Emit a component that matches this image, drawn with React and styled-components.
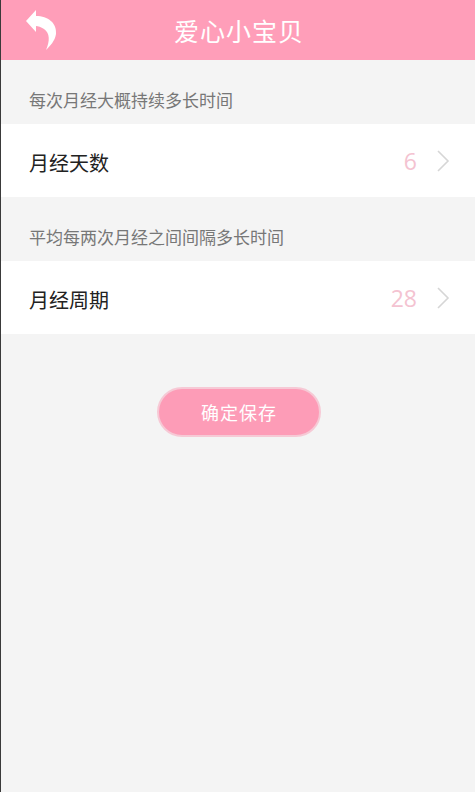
import React from 'react';
import styled, { createGlobalStyle } from 'styled-components';

const GlobalStyle = createGlobalStyle`
  html, body {
    margin: 0;
    padding: 0;
    background: #f4f4f4;
  }
  body {
    font-family: "Noto Sans CJK SC", "Noto Sans", sans-serif;
  }
`;

const Page = styled.div`
  min-height: 792px;
  background: #f4f4f4;
  border-left: 1px solid #3a3a3a;
  box-sizing: border-box;
  display: flex;
  flex-direction: column;
`;

const Header = styled.div`
  height: 60px;
  background: #ff9eb9;
  display: flex;
  align-items: center;
  justify-content: center;
  position: relative;
`;

const BackButton = styled.div`
  position: absolute;
  left: 21px;
  top: 8px;
  width: 40px;
  height: 44px;
`;

const Title = styled.div`
  color: #fff;
  font-size: 25px;
  letter-spacing: 1px;
  margin-left: 2px;
`;

const SectionLabel = styled.div`
  height: 64px;
  box-sizing: border-box;
  padding: 27px 0 0 28px;
  font-size: 17px;
  color: #777;
`;

const Row = styled.div`
  height: 73px;
  background: #fff;
  display: flex;
  align-items: center;
  padding: 0 24px 0 28px;
  box-sizing: border-box;
`;

const RowTitle = styled.div`
  flex: 1;
  font-size: 20px;
  color: #222;
  padding-top: 4px;
`;

const Value = styled.div`
  font-family: "Open Sans", "Noto Sans", sans-serif;
  font-size: 23px;
  color: #f4c3d1;
  margin-right: 18px;
`;

const Actions = styled.div`
  display: flex;
  justify-content: center;
  padding-top: 53px;
`;

const SaveButton = styled.button`
  width: 164px;
  height: 50px;
  border-radius: 25px;
  border: 2px solid #f6c9d5;
  background: #fd9cb7;
  color: #fff;
  font-family: "Noto Sans CJK SC", sans-serif;
  font-size: 18px;
  letter-spacing: 1px;
  margin-left: 2px;
`;

const Chevron = () => (
  <svg width="16" height="24" viewBox="0 0 16 24">
    <path d="M3 2 L13 12 L3 22" fill="none" stroke="#d6d6d6" strokeWidth="1.6" />
  </svg>
);

const BackIcon = () => (
  <svg width="40" height="44" viewBox="0 0 40 44">
    <path
      d="M4 13 L14 2 L14 8 C26 8 35 15 34 26 C33 33 28 38 24 42 C28 33 28 25 22 21 C19 19 16 18 14 18 L14 24 Z"
      fill="#fff"
    />
  </svg>
);

const settings = [
  { label: '每次月经大概持续多长时间', title: '月经天数', value: '6' },
  { label: '平均每两次月经之间间隔多长时间', title: '月经周期', value: '28' },
];

export default function App() {
  return (
    <>
      <GlobalStyle />
      <Page>
        <Header>
          <BackButton>
            <BackIcon />
          </BackButton>
          <Title>爱心小宝贝</Title>
        </Header>
        {settings.map((s) => (
          <React.Fragment key={s.title}>
            <SectionLabel>{s.label}</SectionLabel>
            <Row>
              <RowTitle>{s.title}</RowTitle>
              <Value>{s.value}</Value>
              <Chevron />
            </Row>
          </React.Fragment>
        ))}
        <Actions>
          <SaveButton>确定保存</SaveButton>
        </Actions>
      </Page>
    </>
  );
}
